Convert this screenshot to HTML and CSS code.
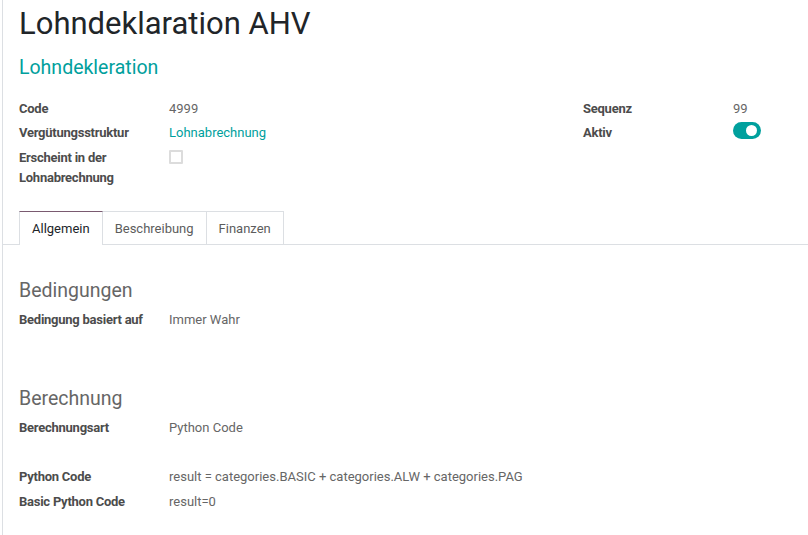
FILE: index.html
```html
<!DOCTYPE html>
<html lang="de">
<head>
<meta charset="utf-8">
<title>Lohndeklaration AHV</title>
<link rel="stylesheet" href="styles.css">
</head>
<body>
<div class="sheet">
  <h1 class="title">Lohndeklaration AHV</h1>
  <h2 class="subtitle">Lohndekleration</h2>

  <div class="groups">
    <div class="group">
      <div class="lbl">Code</div><div class="val">4999</div>
      <div class="lbl">Vergütungsstruktur</div><div class="val link">Lohnabrechnung</div>
      <div class="lbl tall">Erscheint in der Lohnabrechnung</div><div class="val tall"><span class="checkbox"></span></div>
    </div>
    <div class="group">
      <div class="lbl">Sequenz</div><div class="val">99</div>
      <div class="lbl">Aktiv</div><div class="val"><span class="toggle"><span class="knob"></span></span></div>
    </div>
  </div>

  <div class="tabs">
    <div class="tab active">Allgemein</div>
    <div class="tab">Beschreibung</div>
    <div class="tab">Finanzen</div>
  </div>

  <div class="pane">
    <h3 class="sec">Bedingungen</h3>
    <div class="group">
      <div class="lbl">Bedingung basiert auf</div><div class="val">Immer Wahr</div>
    </div>

    <h3 class="sec sec2">Berechnung</h3>
    <div class="group">
      <div class="lbl">Berechnungsart</div><div class="val">Python Code</div>
    </div>
    <div class="group code">
      <div class="lbl">Python Code</div><div class="val">result = categories.BASIC + categories.ALW + categories.PAG</div>
      <div class="lbl">Basic Python Code</div><div class="val">result=0</div>
    </div>
  </div>
</div>
</body>
</html>
```

FILE: styles.css
```css
html, body {
  margin: 0;
  padding: 0;
  background: #ffffff;
}
body {
  font-family: Roboto, "Liberation Sans", sans-serif;
  color: #212529;
  width: 808px;
  height: 535px;
  overflow: hidden;
}
.sheet {
  margin-left: 2px;
  border-left: 1px solid #dcdfe3;
  height: 535px;
  box-sizing: border-box;
  padding-top: 5px;
}
.title {
  margin: 0 0 12px 16px;
  font-size: 31px;
  font-weight: 400;
  line-height: 38px;
  color: #212529;
}
.subtitle {
  margin: 0 0 19px 16px;
  font-size: 19.5px;
  font-weight: 400;
  line-height: 25px;
  color: #00a09d;
}
.groups {
  display: grid;
  grid-template-columns: 564px 1fr;
  padding-left: 16px;
}
.group {
  display: grid;
  grid-template-columns: 150px 1fr;
  row-gap: 4px;
  align-content: start;
}
.lbl {
  font-size: 13px;
  line-height: 20px;
  font-weight: 700;
  letter-spacing: -0.25px;
  color: #4c4c4c;
}
.val {
  font-size: 13px;
  line-height: 20px;
  color: #666666;
}
.lbl.tall, .val.tall {
  margin-top: 1px;
}
.lbl.tall {
  width: 110px;
}
.link {
  color: #00a09d;
}
.checkbox {
  display: block;
  width: 14px;
  height: 14px;
  margin-top: 2px;
  box-sizing: border-box;
  border: 2px solid #dcdcdc;
  border-radius: 1px;
  background: #fff;
}
.toggle {
  display: block;
  position: relative;
  width: 28px;
  height: 17px;
  margin-top: -1px;
  border-radius: 9px;
  background: #00a09d;
}
.knob {
  position: absolute;
  right: 4px;
  top: 3px;
  width: 11px;
  height: 11px;
  border-radius: 50%;
  background: #fff;
}
.tabs {
  display: flex;
  margin-top: 23px;
  padding-left: 16px;
  border-bottom: 1px solid #dcdfe3;
  height: 33px;
}
.tab {
  font-size: 13px;
  color: #5c5c5c;
  line-height: 32px;
  padding: 1px 12px 0 12px;
  border: 1px solid #dcdfe3;
  border-bottom: none;
  margin-left: -1px;
  height: 33px;
  box-sizing: border-box;
  background: #fff;
}
.tab:first-child {
  margin-left: 0;
}
.tab.active {
  color: #212529;
  border-top-color: #7a5a70;
  height: 34px;
  position: relative;
  z-index: 1;
}
.pane {
  padding: 34px 0 0 16px;
}
.sec {
  margin: 0 0 7px 0;
  font-size: 19.5px;
  font-weight: 400;
  line-height: 24px;
  color: #666666;
}
.sec2 {
  margin-top: 57px;
}
.code {
  margin-top: 29px;
  row-gap: 5px;
}
```
